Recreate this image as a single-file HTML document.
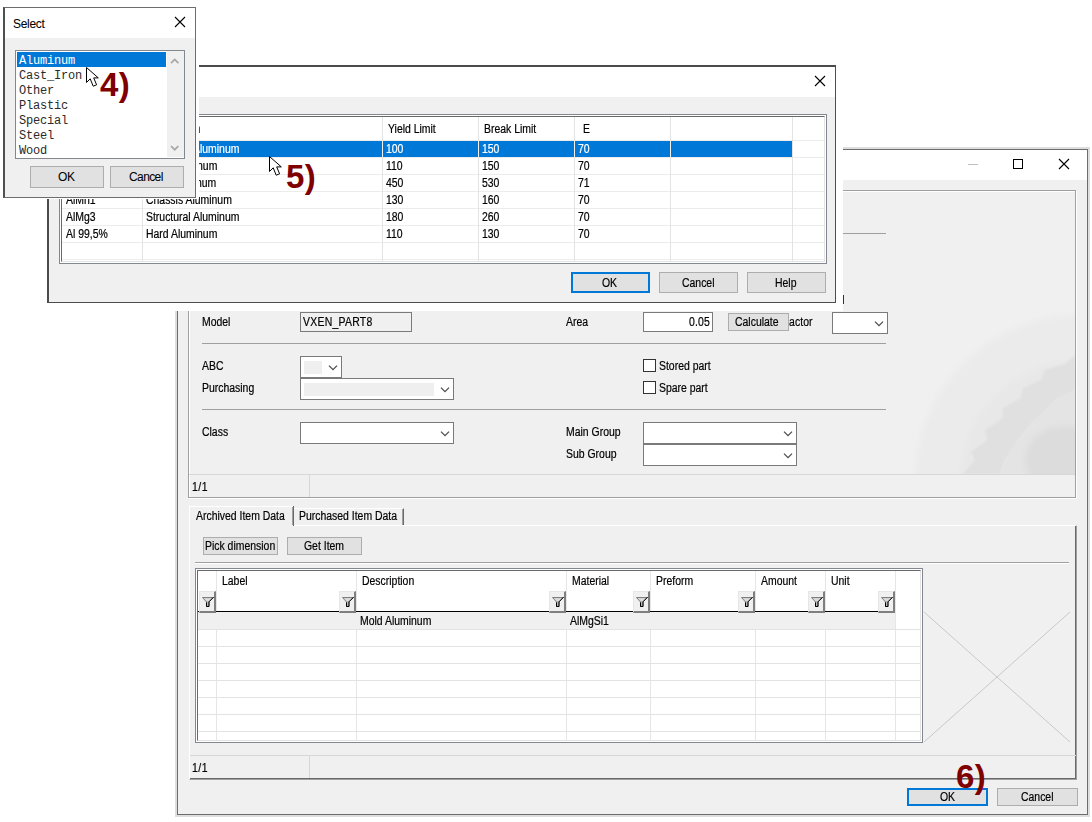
<!DOCTYPE html>
<html><head><meta charset="utf-8">
<style>
html,body{margin:0;padding:0;width:1092px;height:822px;overflow:hidden;background:#fff;position:relative}
.a{position:absolute;box-sizing:border-box}
.t{position:absolute;font-family:"Liberation Sans",sans-serif;font-size:12px;line-height:13px;letter-spacing:0px;white-space:pre;color:#000;transform:scaleX(0.87);transform-origin:0 0;-webkit-text-stroke-width:0.2px}
.m{position:absolute;font-family:"Liberation Mono",monospace;font-size:12px;line-height:15px;letter-spacing:-0.2px;white-space:pre;color:#000}
.btn{position:absolute;box-sizing:border-box;background:#e1e1e1;border:1px solid #adadad}
.cb{position:absolute;box-sizing:border-box;background:#fff;border:1px solid #7a7a7a}
.chev{position:absolute;width:9px;height:5px}
.hl{position:absolute;height:1px;background:#a0a0a0}
.vl{position:absolute;width:1px;background:#a0a0a0}
.ann{position:absolute;font-family:"Liberation Sans",sans-serif;font-weight:bold;font-size:33px;line-height:36px;letter-spacing:0.5px;color:#7f0000;white-space:pre}
</style></head><body>

<!-- ================= MAIN WINDOW ================= -->
<div id="main" class="a" style="left:175px;top:147px;width:915px;height:670px;background:#dedede"></div>
<div class="a" style="left:177px;top:149px;width:911px;height:666px;border:1px solid #6d6d6d;background:#f0f0f0"></div>
<div class="a" style="left:178px;top:150px;width:909px;height:30px;background:#fff"></div>
<!-- title buttons -->
<div class="a" style="left:968px;top:164px;width:10px;height:1px;background:#bfbfbf"></div>
<div class="a" style="left:1013px;top:159px;width:10px;height:10px;border:1px solid #000"></div>
<svg class="a" style="left:1058px;top:158px" width="12" height="12" viewBox="0 0 12 12"><path d="M1 1L11 11M11 1L1 11" stroke="#000" stroke-width="1.1" fill="none"/></svg>

<!-- upper group box -->
<div class="a" style="left:189px;top:191px;width:888px;height:308px;border:1px solid #fff"></div>
<div class="a" style="left:188px;top:190px;width:888px;height:308px;border:1px solid #a0a0a0"></div>
<div class="hl" style="left:202px;top:233px;width:684px"></div>
<div class="a" style="left:843px;top:295px;width:1px;height:9px;background:#1c2a8a"></div>

<!-- row Model -->
<div class="t" style="left:202px;top:316px">Model</div>
<div class="a" style="left:300px;top:312px;width:112px;height:20px;border:1px solid #7a7a7a;background:#f0f0f0"></div>
<div class="t" style="left:303px;top:316px;letter-spacing:0.3px">VXEN_PART8</div>
<div class="t" style="left:566px;top:316px">Area</div>
<div class="cb" style="left:643px;top:312px;width:70px;height:20px"></div>
<div class="t" style="left:689px;top:316px;letter-spacing:0.2px">0.05</div>
<div class="t" style="left:789px;top:316px;letter-spacing:0.1px">actor</div>
<div class="btn" style="left:728px;top:313px;width:61px;height:18px"></div>
<div class="t" style="left:735px;top:316px">Calculate</div>
<div class="cb" style="left:832px;top:312px;width:56px;height:22px"></div>
<svg class="a" style="left:874px;top:320px" width="10" height="7" viewBox="0 0 10 7"><path d="M1 1.6L5 5.6L9 1.6" stroke="#4d4d4d" fill="none" stroke-width="1.3"/></svg>
<div class="hl" style="left:202px;top:343px;width:684px"></div>

<!-- ABC / Purchasing -->
<div class="t" style="left:202px;top:360px">ABC</div>
<div class="cb" style="left:300px;top:356px;width:42px;height:22px"></div>
<div class="a" style="left:304px;top:361px;width:18px;height:13px;background:#efefef"></div>
<svg class="a" style="left:328px;top:364px" width="10" height="7" viewBox="0 0 10 7"><path d="M1 1.6L5 5.6L9 1.6" stroke="#4d4d4d" fill="none" stroke-width="1.3"/></svg>
<div class="t" style="left:202px;top:382px">Purchasing</div>
<div class="cb" style="left:300px;top:378px;width:154px;height:22px"></div>
<div class="a" style="left:304px;top:383px;width:130px;height:13px;background:#efefef"></div>
<svg class="a" style="left:440px;top:386px" width="10" height="7" viewBox="0 0 10 7"><path d="M1 1.6L5 5.6L9 1.6" stroke="#4d4d4d" fill="none" stroke-width="1.3"/></svg>
<div class="a" style="left:643px;top:359px;width:13px;height:13px;border:1px solid #333;background:#fff"></div>
<div class="t" style="left:659px;top:360px">Stored part</div>
<div class="a" style="left:643px;top:381px;width:13px;height:13px;border:1px solid #333;background:#fff"></div>
<div class="t" style="left:659px;top:382px">Spare part</div>
<div class="hl" style="left:202px;top:409px;width:684px"></div>

<!-- Class / groups -->
<div class="t" style="left:202px;top:426px">Class</div>
<div class="cb" style="left:300px;top:422px;width:154px;height:22px"></div>
<svg class="a" style="left:440px;top:430px" width="10" height="7" viewBox="0 0 10 7"><path d="M1 1.6L5 5.6L9 1.6" stroke="#4d4d4d" fill="none" stroke-width="1.3"/></svg>
<div class="t" style="left:566px;top:426px">Main Group</div>
<div class="cb" style="left:643px;top:422px;width:154px;height:22px"></div>
<svg class="a" style="left:783px;top:430px" width="10" height="7" viewBox="0 0 10 7"><path d="M1 1.6L5 5.6L9 1.6" stroke="#4d4d4d" fill="none" stroke-width="1.3"/></svg>
<div class="t" style="left:566px;top:448px">Sub Group</div>
<div class="cb" style="left:643px;top:444px;width:154px;height:22px"></div>
<svg class="a" style="left:783px;top:452px" width="10" height="7" viewBox="0 0 10 7"><path d="M1 1.6L5 5.6L9 1.6" stroke="#4d4d4d" fill="none" stroke-width="1.3"/></svg>

<!-- gear watermark -->
<svg class="a" style="left:905px;top:300px" width="170" height="174" viewBox="0 0 170 174">
<defs><filter id="bl" x="-20%" y="-20%" width="140%" height="140%"><feGaussianBlur stdDeviation="3"/></filter>
<filter id="bl2"><feGaussianBlur stdDeviation="1.2"/></filter></defs>
<circle cx="175" cy="180" r="165" fill="#ebebeb" filter="url(#bl)"/>
<circle cx="175" cy="180" r="120" fill="#e8e8e8" filter="url(#bl)"/>
<path d="M58 174 L70 160 L66 152 L82 140 L80 130 L98 118 L98 108 L116 98 L118 88 L136 80 L140 70 L160 64 L170 55 L170 90 L150 100 L140 112 L128 122 L118 134 L108 148 L100 160 L95 174 Z" fill="#e0e0e0" filter="url(#bl2)"/>
<path d="M95 174 L108 148 L128 122 L150 100 L170 90 L170 174 Z" fill="#e4e4e4" filter="url(#bl2)"/>
<ellipse cx="160" cy="160" rx="40" ry="34" fill="#dcdcdc" filter="url(#bl)"/>
</svg>
<!-- status upper -->
<div class="a" style="left:189px;top:474px;width:886px;height:1px;background:#d7d7d7"></div>
<div class="a" style="left:309px;top:475px;width:1px;height:22px;background:#d7d7d7"></div>
<div class="t" style="left:192px;top:481px;letter-spacing:0.6px">1/1</div>


<!-- ============ TABS ============ -->
<!-- tab panel -->
<div class="a" style="left:189px;top:525px;width:888px;height:255px;border-top:1px solid #fff;border-left:1px solid #fff;border-right:1px solid #a0a0a0;border-bottom:1px solid #a0a0a0"></div>
<div class="a" style="left:190px;top:526px;width:886px;height:253px;border-right:1px solid #696969;border-bottom:1px solid #696969"></div>
<!-- selected tab -->
<div class="a" style="left:189px;top:506px;width:105px;height:21px;background:#f0f0f0;border-top:1px solid #fff;border-left:1px solid #fff"></div>
<div class="a" style="left:292px;top:507px;width:1px;height:18px;background:#a0a0a0"></div>
<div class="a" style="left:293px;top:506px;width:1px;height:20px;background:#696969"></div>
<div class="t" style="left:196px;top:510px">Archived Item Data</div>
<!-- other tab -->
<div class="a" style="left:294px;top:508px;width:110px;height:17px;border-top:1px solid #fff;border-right:1px solid #696969"></div>
<div class="a" style="left:402px;top:509px;width:1px;height:16px;background:#a0a0a0"></div>
<div class="t" style="left:299px;top:510px">Purchased Item Data</div>
<!-- buttons -->
<div class="btn" style="left:203px;top:537px;width:75px;height:18px"></div>
<div class="t" style="left:205px;top:540px">Pick dimension</div>
<div class="btn" style="left:287px;top:537px;width:75px;height:18px"></div>
<div class="t" style="left:304px;top:540px">Get Item</div>
<div class="a" style="left:195px;top:562px;width:874px;height:1px;background:#a0a0a0"></div>
<div class="a" style="left:195px;top:563px;width:874px;height:1px;background:#fff"></div>

<!-- grid -->
<div class="a" style="left:195px;top:568px;width:728px;height:175px;border:1px solid #828790;background:#fff"></div>
<div class="a" style="left:197px;top:570px;width:724px;height:171px;border-top:1px solid #696969;border-left:1px solid #696969;border-right:1px solid #e3e3e3;border-bottom:1px solid #e3e3e3;background:#fff"></div>
<div class="a" style="left:216px;top:571px;width:1px;height:170px;background:#e6e6e6"></div>
<div class="a" style="left:356px;top:571px;width:1px;height:170px;background:#e6e6e6"></div>
<div class="a" style="left:566px;top:571px;width:1px;height:170px;background:#e6e6e6"></div>
<div class="a" style="left:650px;top:571px;width:1px;height:170px;background:#e6e6e6"></div>
<div class="a" style="left:755px;top:571px;width:1px;height:170px;background:#e6e6e6"></div>
<div class="a" style="left:825px;top:571px;width:1px;height:170px;background:#e6e6e6"></div>
<div class="a" style="left:895px;top:571px;width:1px;height:170px;background:#e6e6e6"></div>
<div class="t" style="left:222px;top:575px">Label</div>
<div class="t" style="left:362px;top:575px">Description</div>
<div class="t" style="left:572px;top:575px">Material</div>
<div class="t" style="left:656px;top:575px">Preform</div>
<div class="t" style="left:761px;top:575px">Amount</div>
<div class="t" style="left:831px;top:575px">Unit</div>
<div class="a" style="left:198px;top:611px;width:697px;height:1px;background:#000"></div>
<div class="a" style="left:198px;top:612px;width:697px;height:17px;background:#f0f0f0"></div>
<div class="a" style="left:199px;top:591px;width:17px;height:22px;background:#f0f0f0;border-left:1px solid #e6e6e6;border-top:1px solid #e6e6e6;border-right:2px solid #7f7f7f;border-bottom:2px solid #7f7f7f"></div>
<svg class="a" style="left:202px;top:596px" width="13" height="12" viewBox="0 0 13 12"><path d="M0.5 1.5H11.5L7 6V10.5H4.5V6Z" fill="#b8b8b8" stroke="#808080" stroke-width="1"/><path d="M1.8 2.2L4.6 5H7L10 2.2Z" fill="#dcdcdc"/><path d="M11.6 1.1L7 5.8V10.5H4.5V6.5" stroke="#000" fill="none" stroke-width="1"/></svg>
<div class="a" style="left:339px;top:591px;width:17px;height:22px;background:#f0f0f0;border-left:1px solid #e6e6e6;border-top:1px solid #e6e6e6;border-right:2px solid #7f7f7f;border-bottom:2px solid #7f7f7f"></div>
<svg class="a" style="left:342px;top:596px" width="13" height="12" viewBox="0 0 13 12"><path d="M0.5 1.5H11.5L7 6V10.5H4.5V6Z" fill="#b8b8b8" stroke="#808080" stroke-width="1"/><path d="M1.8 2.2L4.6 5H7L10 2.2Z" fill="#dcdcdc"/><path d="M11.6 1.1L7 5.8V10.5H4.5V6.5" stroke="#000" fill="none" stroke-width="1"/></svg>
<div class="a" style="left:549px;top:591px;width:17px;height:22px;background:#f0f0f0;border-left:1px solid #e6e6e6;border-top:1px solid #e6e6e6;border-right:2px solid #7f7f7f;border-bottom:2px solid #7f7f7f"></div>
<svg class="a" style="left:552px;top:596px" width="13" height="12" viewBox="0 0 13 12"><path d="M0.5 1.5H11.5L7 6V10.5H4.5V6Z" fill="#b8b8b8" stroke="#808080" stroke-width="1"/><path d="M1.8 2.2L4.6 5H7L10 2.2Z" fill="#dcdcdc"/><path d="M11.6 1.1L7 5.8V10.5H4.5V6.5" stroke="#000" fill="none" stroke-width="1"/></svg>
<div class="a" style="left:633px;top:591px;width:17px;height:22px;background:#f0f0f0;border-left:1px solid #e6e6e6;border-top:1px solid #e6e6e6;border-right:2px solid #7f7f7f;border-bottom:2px solid #7f7f7f"></div>
<svg class="a" style="left:636px;top:596px" width="13" height="12" viewBox="0 0 13 12"><path d="M0.5 1.5H11.5L7 6V10.5H4.5V6Z" fill="#b8b8b8" stroke="#808080" stroke-width="1"/><path d="M1.8 2.2L4.6 5H7L10 2.2Z" fill="#dcdcdc"/><path d="M11.6 1.1L7 5.8V10.5H4.5V6.5" stroke="#000" fill="none" stroke-width="1"/></svg>
<div class="a" style="left:738px;top:591px;width:17px;height:22px;background:#f0f0f0;border-left:1px solid #e6e6e6;border-top:1px solid #e6e6e6;border-right:2px solid #7f7f7f;border-bottom:2px solid #7f7f7f"></div>
<svg class="a" style="left:741px;top:596px" width="13" height="12" viewBox="0 0 13 12"><path d="M0.5 1.5H11.5L7 6V10.5H4.5V6Z" fill="#b8b8b8" stroke="#808080" stroke-width="1"/><path d="M1.8 2.2L4.6 5H7L10 2.2Z" fill="#dcdcdc"/><path d="M11.6 1.1L7 5.8V10.5H4.5V6.5" stroke="#000" fill="none" stroke-width="1"/></svg>
<div class="a" style="left:808px;top:591px;width:17px;height:22px;background:#f0f0f0;border-left:1px solid #e6e6e6;border-top:1px solid #e6e6e6;border-right:2px solid #7f7f7f;border-bottom:2px solid #7f7f7f"></div>
<svg class="a" style="left:811px;top:596px" width="13" height="12" viewBox="0 0 13 12"><path d="M0.5 1.5H11.5L7 6V10.5H4.5V6Z" fill="#b8b8b8" stroke="#808080" stroke-width="1"/><path d="M1.8 2.2L4.6 5H7L10 2.2Z" fill="#dcdcdc"/><path d="M11.6 1.1L7 5.8V10.5H4.5V6.5" stroke="#000" fill="none" stroke-width="1"/></svg>
<div class="a" style="left:878px;top:591px;width:17px;height:22px;background:#f0f0f0;border-left:1px solid #e6e6e6;border-top:1px solid #e6e6e6;border-right:2px solid #7f7f7f;border-bottom:2px solid #7f7f7f"></div>
<svg class="a" style="left:881px;top:596px" width="13" height="12" viewBox="0 0 13 12"><path d="M0.5 1.5H11.5L7 6V10.5H4.5V6Z" fill="#b8b8b8" stroke="#808080" stroke-width="1"/><path d="M1.8 2.2L4.6 5H7L10 2.2Z" fill="#dcdcdc"/><path d="M11.6 1.1L7 5.8V10.5H4.5V6.5" stroke="#000" fill="none" stroke-width="1"/></svg>
<div class="t" style="left:360px;top:615px">Mold Aluminum</div>
<div class="t" style="left:570px;top:615px">AlMgSi1</div>
<div class="a" style="left:198px;top:629px;width:723px;height:1px;background:#e3e3e3"></div>
<div class="a" style="left:198px;top:646px;width:723px;height:1px;background:#e3e3e3"></div>
<div class="a" style="left:198px;top:663px;width:723px;height:1px;background:#e3e3e3"></div>
<div class="a" style="left:198px;top:680px;width:723px;height:1px;background:#e3e3e3"></div>
<div class="a" style="left:198px;top:697px;width:723px;height:1px;background:#e3e3e3"></div>
<div class="a" style="left:198px;top:714px;width:723px;height:1px;background:#e3e3e3"></div>
<div class="a" style="left:198px;top:731px;width:723px;height:1px;background:#e3e3e3"></div>
<!-- X placeholder -->
<svg class="a" style="left:923px;top:611px" width="149" height="133" viewBox="0 0 149 133"><path d="M1 1L147 131M1 131L147 1" stroke="#c8c8c8" stroke-width="1" fill="none"/></svg>
<!-- status lower -->
<div class="a" style="left:190px;top:755px;width:886px;height:1px;background:#d7d7d7"></div>
<div class="a" style="left:309px;top:756px;width:1px;height:22px;background:#d7d7d7"></div>
<div class="t" style="left:192px;top:762px;letter-spacing:0.6px">1/1</div>
<!-- bottom buttons -->
<div class="btn" style="left:907px;top:788px;width:81px;height:18px;border:2px solid #0078d7"></div>
<div class="t" style="left:940px;top:791px">OK</div>
<div class="btn" style="left:997px;top:788px;width:81px;height:18px"></div>
<div class="t" style="left:1021px;top:791px">Cancel</div>


<!-- ============ MATERIALS DIALOG ============ -->
<div class="a" style="left:39px;top:57px;width:804px;height:254px;background:#fff"></div>
<div class="a" style="left:47px;top:65px;width:789px;height:238px;border:1px solid #4d4d4d;border-left:2px solid #4b4b4b;border-top:2px solid #4b4b4b;background:#f0f0f0"></div>
<div class="a" style="left:49px;top:67px;width:786px;height:30px;background:#fff"></div>
<svg class="a" style="left:814px;top:75px" width="12" height="12" viewBox="0 0 12 12"><path d="M1 1L11 11M11 1L1 11" stroke="#000" stroke-width="1.1" fill="none"/></svg>
<div class="a" style="left:59px;top:114px;width:768px;height:150px;border:1px solid #828790;background:#fff"></div>
<div class="a" style="left:61px;top:116px;width:764px;height:146px;border-top:1px solid #696969;border-left:1px solid #696969;border-right:1px solid #e3e3e3;border-bottom:1px solid #e3e3e3;background:#fff"></div>
<div class="a" style="left:62px;top:140px;width:762px;height:1px;background:#ececec"></div>
<div class="a" style="left:62px;top:157px;width:762px;height:1px;background:#ececec"></div>
<div class="a" style="left:62px;top:174px;width:762px;height:1px;background:#ececec"></div>
<div class="a" style="left:62px;top:191px;width:762px;height:1px;background:#ececec"></div>
<div class="a" style="left:62px;top:208px;width:762px;height:1px;background:#ececec"></div>
<div class="a" style="left:62px;top:225px;width:762px;height:1px;background:#ececec"></div>
<div class="a" style="left:62px;top:242px;width:762px;height:1px;background:#ececec"></div>
<div class="a" style="left:62px;top:259px;width:762px;height:1px;background:#ececec"></div>
<div class="a" style="left:142px;top:117px;width:1px;height:144px;background:#e3e3e3"></div>
<div class="a" style="left:382px;top:117px;width:1px;height:144px;background:#e3e3e3"></div>
<div class="a" style="left:478px;top:117px;width:1px;height:144px;background:#e3e3e3"></div>
<div class="a" style="left:574px;top:117px;width:1px;height:144px;background:#e3e3e3"></div>
<div class="a" style="left:670px;top:117px;width:1px;height:144px;background:#e3e3e3"></div>
<div class="a" style="left:792px;top:117px;width:1px;height:144px;background:#e3e3e3"></div>
<div class="a" style="left:62px;top:141px;width:730px;height:16px;background:#0078d7"></div>
<div class="a" style="left:142px;top:141px;width:1px;height:16px;background:#f0f0f0"></div>
<div class="a" style="left:382px;top:141px;width:1px;height:16px;background:#f0f0f0"></div>
<div class="a" style="left:478px;top:141px;width:1px;height:16px;background:#f0f0f0"></div>
<div class="a" style="left:574px;top:141px;width:1px;height:16px;background:#f0f0f0"></div>
<div class="a" style="left:670px;top:141px;width:1px;height:16px;background:#f0f0f0"></div>
<div class="t" style="left:66px;top:123px">Material</div>
<div class="t" style="left:148px;top:123px">Description</div>
<div class="t" style="left:388px;top:123px">Yield Limit</div>
<div class="t" style="left:484px;top:123px">Break Limit</div>
<div class="t" style="left:583px;top:123px">E</div>
<div class="t" style="left:66px;top:143px;color:#fff">AlMgSi1</div>
<div class="t" style="left:146px;top:143px;color:#fff">Structural Aluminum</div>
<div class="t" style="left:386px;top:143px;color:#fff">100</div>
<div class="t" style="left:482px;top:143px;color:#fff">150</div>
<div class="t" style="left:578px;top:143px;color:#fff">70</div>
<div class="t" style="left:66px;top:160px;color:#000">AlSi12</div>
<div class="t" style="left:146px;top:160px;color:#000">Mold Aluminum</div>
<div class="t" style="left:386px;top:160px;color:#000">110</div>
<div class="t" style="left:482px;top:160px;color:#000">150</div>
<div class="t" style="left:578px;top:160px;color:#000">70</div>
<div class="t" style="left:66px;top:177px;color:#000">AlZn5,5MgCu</div>
<div class="t" style="left:146px;top:177px;color:#000">Cast Aluminum</div>
<div class="t" style="left:386px;top:177px;color:#000">450</div>
<div class="t" style="left:482px;top:177px;color:#000">530</div>
<div class="t" style="left:578px;top:177px;color:#000">71</div>
<div class="t" style="left:66px;top:194px;color:#000">AlMn1</div>
<div class="t" style="left:146px;top:194px;color:#000">Chassis Aluminum</div>
<div class="t" style="left:386px;top:194px;color:#000">130</div>
<div class="t" style="left:482px;top:194px;color:#000">160</div>
<div class="t" style="left:578px;top:194px;color:#000">70</div>
<div class="t" style="left:66px;top:211px;color:#000">AlMg3</div>
<div class="t" style="left:146px;top:211px;color:#000">Structural Aluminum</div>
<div class="t" style="left:386px;top:211px;color:#000">180</div>
<div class="t" style="left:482px;top:211px;color:#000">260</div>
<div class="t" style="left:578px;top:211px;color:#000">70</div>
<div class="t" style="left:66px;top:228px;color:#000">Al 99,5%</div>
<div class="t" style="left:146px;top:228px;color:#000">Hard Aluminum</div>
<div class="t" style="left:386px;top:228px;color:#000">110</div>
<div class="t" style="left:482px;top:228px;color:#000">130</div>
<div class="t" style="left:578px;top:228px;color:#000">70</div>
<div class="btn" style="left:571px;top:272px;width:79px;height:21px;border:2px solid #0078d7"></div>
<div class="t" style="left:602px;top:277px">OK</div>
<div class="btn" style="left:659px;top:272px;width:79px;height:21px"></div>
<div class="t" style="left:682px;top:277px">Cancel</div>
<div class="btn" style="left:747px;top:272px;width:79px;height:21px"></div>
<div class="t" style="left:775px;top:277px">Help</div>
<!-- ============ SELECT DIALOG ============ -->
<div class="a" style="left:0px;top:0px;width:199px;height:199px;background:#fff"></div>
<div class="a" style="left:3px;top:7px;width:193px;height:191px;border:1px solid #6d6d6d;border-left:2px solid #4f4f4f;background:#f0f0f0"></div>
<div class="a" style="left:5px;top:8px;width:190px;height:30px;background:#fff"></div>
<div class="t" style="left:13px;top:18px;font-size:12px;letter-spacing:-0.3px;transform:none;-webkit-text-stroke-width:0.05px">Select</div>
<svg class="a" style="left:174px;top:16px" width="12" height="12" viewBox="0 0 12 12"><path d="M1 1L11 11M11 1L1 11" stroke="#000" stroke-width="1.1" fill="none"/></svg>
<div class="a" style="left:15px;top:50px;width:170px;height:109px;border:1px solid #828790;background:#fff"></div>
<div class="a" style="left:167px;top:51px;width:17px;height:106px;background:#f0f0f0"></div>
<svg class="a" style="left:170px;top:57px" width="10" height="8" viewBox="0 0 10 8"><path d="M1 6.2L4.7 2.5L8.4 6.2" stroke="#a6a6a6" fill="none" stroke-width="1.7"/></svg>
<svg class="a" style="left:170px;top:144px" width="10" height="8" viewBox="0 0 10 8"><path d="M1 2L4.7 5.7L8.4 2" stroke="#a6a6a6" fill="none" stroke-width="1.7"/></svg>
<div class="a" style="left:17px;top:52px;width:149px;height:15px;background:#0078d7"></div>
<div class="m" style="left:19px;top:54px;color:#fff">Aluminum</div>
<div class="m" style="left:19px;top:69px;color:#2a2a2a">Cast_Iron</div>
<div class="m" style="left:19px;top:84px;color:#2a2a2a">Other</div>
<div class="m" style="left:19px;top:99px;color:#2a2a2a">Plastic</div>
<div class="m" style="left:19px;top:114px;color:#2a2a2a">Special</div>
<div class="m" style="left:19px;top:129px;color:#2a2a2a">Steel</div>
<div class="m" style="left:19px;top:144px;color:#2a2a2a">Wood</div>
<div class="btn" style="left:30px;top:166px;width:74px;height:22px"></div>
<div class="t" style="left:58px;top:171px;font-size:12px;letter-spacing:-0.3px;transform:none;-webkit-text-stroke-width:0.05px">OK</div>
<div class="btn" style="left:110px;top:166px;width:74px;height:22px"></div>
<div class="t" style="left:129px;top:171px;font-size:12px;letter-spacing:-0.6px;transform:none;-webkit-text-stroke-width:0.05px">Cancel</div>
<!-- ============ ANNOTATIONS ============ -->
<div class="ann" style="left:100px;top:67px">4)</div>
<div class="ann" style="left:286px;top:159px">5)</div>
<div class="ann" style="left:956px;top:759px">6)</div>
<svg class="a" style="left:86px;top:67px" width="14" height="21" viewBox="0 0 14 21"><path d="M0.5 0.5V15.5L4.2 11.8L7.2 19.2L10.6 17.8L7.7 10.9H12.3Z" fill="#fff" stroke="#000" stroke-width="1"/></svg>
<svg class="a" style="left:269px;top:156px" width="14" height="21" viewBox="0 0 14 21"><path d="M0.5 0.5V15.5L4.2 11.8L7.2 19.2L10.6 17.8L7.7 10.9H12.3Z" fill="#fff" stroke="#000" stroke-width="1"/></svg>

</body></html>
